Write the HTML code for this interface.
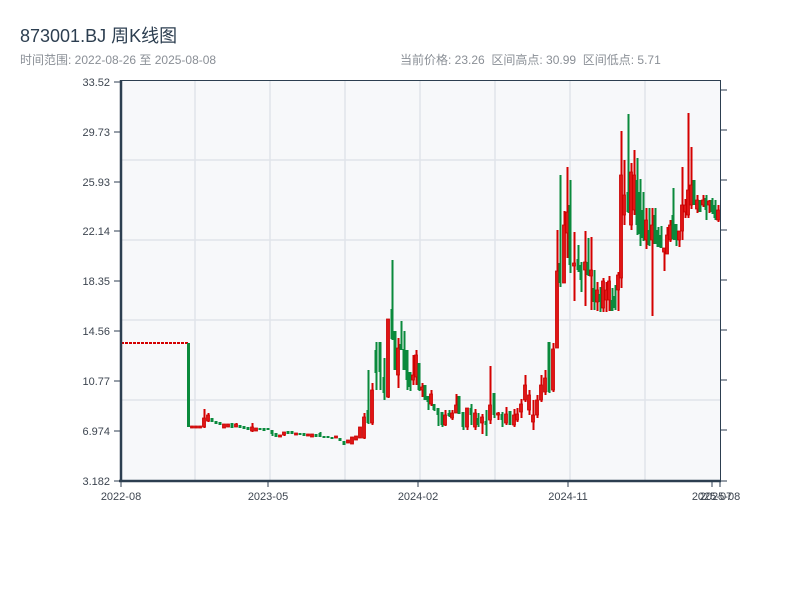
<!DOCTYPE html>
<html><head><meta charset="utf-8"><style>
body{margin:0;width:800px;height:600px;background:#fff;overflow:hidden;font-family:"Liberation Sans","Noto Sans CJK SC",sans-serif;}
.t{position:absolute;left:20px;top:22px;font-size:18px;color:#2c3e50;}
.s{position:absolute;top:51px;font-size:12px;color:#8a8f96;}
</style></head><body>
<div class="t">873001.BJ 周K线图</div>
<div class="s" style="left:20px">时间范围: 2022-08-26 至 2025-08-08</div>
<div class="s" style="left:400px">当前价格: 23.26&nbsp;&nbsp;区间高点: 30.99&nbsp;&nbsp;区间低点: 5.71</div>
<svg id="c" width="800" height="600" style="position:absolute;left:0;top:0" xmlns="http://www.w3.org/2000/svg">
<rect x="121" y="81" width="599" height="400" fill="#f7f8fa"/>
<g stroke="#e1e4ea" stroke-width="1.5">
<line x1="195" y1="81" x2="195" y2="481"/><line x1="270" y1="81" x2="270" y2="481"/><line x1="345" y1="81" x2="345" y2="481"/><line x1="420" y1="81" x2="420" y2="481"/><line x1="495" y1="81" x2="495" y2="481"/><line x1="570" y1="81" x2="570" y2="481"/><line x1="645" y1="81" x2="645" y2="481"/>
<line x1="121" y1="160" x2="720" y2="160"/><line x1="121" y1="240" x2="720" y2="240"/><line x1="121" y1="320" x2="720" y2="320"/><line x1="121" y1="400" x2="720" y2="400"/>
</g>
<g id="k"></g>
<g stroke="#2c3e50">
<line x1="120" y1="80.5" x2="720" y2="80.5" stroke-width="1"/>
<line x1="121" y1="80" x2="121" y2="482" stroke-width="2.5"/>
<line x1="119" y1="481" x2="721" y2="481" stroke-width="2.5"/>
<line x1="720.5" y1="80" x2="720.5" y2="482" stroke-width="1"/>
<g stroke-width="1">
<line x1="114" y1="82" x2="120" y2="82"/><line x1="114" y1="132" x2="120" y2="132"/><line x1="114" y1="182" x2="120" y2="182"/><line x1="114" y1="231" x2="120" y2="231"/><line x1="114" y1="281" x2="120" y2="281"/><line x1="114" y1="331" x2="120" y2="331"/><line x1="114" y1="381" x2="120" y2="381"/><line x1="114" y1="431" x2="120" y2="431"/><line x1="114" y1="481" x2="120" y2="481"/>
<line x1="720" y1="90" x2="727" y2="90"/><line x1="720" y1="130" x2="727" y2="130"/><line x1="720" y1="180" x2="727" y2="180"/><line x1="720" y1="230" x2="727" y2="230"/><line x1="720" y1="280" x2="727" y2="280"/><line x1="720" y1="330" x2="727" y2="330"/><line x1="720" y1="380" x2="727" y2="380"/><line x1="720" y1="430" x2="727" y2="430"/><line x1="720" y1="481" x2="727" y2="481"/>
<line x1="121" y1="481" x2="121" y2="487"/><line x1="268" y1="481" x2="268" y2="487"/><line x1="418" y1="481" x2="418" y2="487"/><line x1="568" y1="481" x2="568" y2="487"/><line x1="712" y1="481" x2="712" y2="487"/><line x1="720" y1="481" x2="720" y2="487"/>
</g></g>
<g font-size="11" fill="#3d4550" text-anchor="end" font-family="Liberation Sans,sans-serif">
<text x="110" y="86">33.52</text><text x="110" y="136">29.73</text><text x="110" y="186">25.93</text><text x="110" y="235">22.14</text><text x="110" y="285">18.35</text><text x="110" y="335">14.56</text><text x="110" y="385">10.77</text><text x="110" y="435">6.974</text><text x="110" y="485">3.182</text>
</g>
<g font-size="11" fill="#3d4550" text-anchor="middle" font-family="Liberation Sans,sans-serif">
<text x="121" y="500">2022-08</text><text x="268" y="500">2023-05</text><text x="418" y="500">2024-02</text><text x="568" y="500">2024-11</text><text x="712" y="500">2025-07</text><text x="720" y="500">2025-08</text>
</g>
</svg>
<script>
var D=[
[191,426,428,426,428,'r'],[195,426,428,426,428,'r'],[199,426,428,426,428,'r'],[203,418,427,409,428,'r'],[207,415,421,413,422,'r'],[211,418,422,418,422,'g'],[215,421,424,421,424,'g'],[219,422,425,422,425,'g'],[223,424,428,424,428,'r'],[227,424,427,424,427,'r'],[231,423,428,423,428,'g'],[235,424,427,423,427,'r'],[239,425,428,425,428,'g'],[243,426,429,426,429,'g'],[247,427,430,427,430,'g'],[251,427,431,423,432,'r'],[255,428,431,428,431,'r'],[259,428,430,428,430,'g'],[263,428,431,428,431,'g'],[267,428,430,428,430,'g'],[271,430,434,430,436,'g'],[275,433,437,433,437,'g'],[279,435,437,435,437,'r'],[283,432,435,432,436,'r'],[287,431,434,431,434,'g'],[291,431,434,431,434,'g'],[295,433,435,433,435,'r'],[299,433,435,433,435,'g'],[303,433,436,433,436,'g'],[307,434,436,434,436,'r'],[311,434,437,434,437,'r'],[315,434,437,434,437,'g'],[319,433,437,432,437,'g'],[323,436,438,436,438,'g'],[327,436,438,436,438,'g'],[331,437,439,437,439,'g'],[335,436,438,436,438,'r'],[339,438,441,438,441,'g'],[343,441,445,441,445,'g'],[347,440,443,440,443,'r'],[351,437,444,437,444,'r'],[355,436,440,436,440,'r'],
[359,427,438,427,438,'r'],[363,417,438,413,439,'r'],[367,410,423,370,424,'g'],[371,390,423,383,425,'r'],[375,350,373,342,390,'g'],[379,342,372,342,390,'g'],[383,377,393,358,400,'g'],[387,319,397,319,398,'r'],[391,309,339,260,340,'g'],[394,331,370,331,370,'g'],[397,348,375,338,388,'r'],[400,344,350,321,350,'g'],[403,349,370,331,370,'g'],[406,350,380,350,390,'g'],[409,372,387,372,391,'g'],[412,375,380,355,385,'r'],[415,355,377,350,385,'r'],[418,363,390,363,391,'g'],[421,387,390,383,397,'r'],[424,385,400,385,400,'g'],[427,396,402,396,410,'g'],[430,394,404,390,406,'r'],[433,404,410,404,411,'g'],[437,408,415,408,426,'g'],[441,412,425,412,427,'g'],[444,415,425,410,426,'r'],[448,413,416,410,417,'g'],[451,413,418,410,420,'r'],[455,405,413,394,413,'r'],[458,396,414,396,414,'g'],[462,412,427,412,430,'g'],[466,408,427,410,430,'r'],[470,408,415,404,425,'g'],[474,413,427,409,430,'r'],[477,418,425,413,427,'g'],[481,417,423,414,434,'r'],[485,421,425,410,436,'g'],[489,405,420,366,424,'r'],[493,393,415,393,418,'g'],[497,413,415,412,420,'r'],[501,414,420,412,427,'g'],[505,414,423,407,425,'r'],[509,411,425,411,425,'g'],[513,415,425,409,427,'r'],[516,414,420,408,422,'r'],[520,404,412,399,418,'r'],[524,385,400,375,402,'r'],[528,395,410,390,415,'r'],[532,415,422,400,430,'r'],[536,400,415,395,418,'r'],[540,385,400,375,402,'r'],[544,378,392,370,395,'r'],[548,342,392,342,393,'g'],[552,349,390,343,392,'r'],[556,271,348,230,348,'r'],[559,263,283,175,287,'g'],[563,225,283,211,283,'r'],[566,212,233,167,258,'r'],[569,205,265,180,273,'g'],[573,263,266,232,301,'r'],[577,259,270,245,272,'g'],[580,265,280,262,292,'g'],[584,262,270,231,306,'r'],[587,262,275,238,276,'g'],[590,270,276,237,310,'r'],[593,288,302,270,310,'g'],[596,290,302,282,311,'r'],[599,294,302,287,312,'g'],[602,281,308,278,312,'r'],[605,290,300,282,312,'r'],[608,281,300,276,311,'r'],[611,300,311,288,311,'g'],[614,296,308,285,310,'g'],[617,275,290,272,311,'r'],[620,175,278,131,288,'r'],[623,195,215,160,225,'r'],[627,192,212,114,213,'g'],[630,172,225,163,230,'r'],[633,175,210,150,215,'r'],[636,180,225,158,235,'g'],[639,192,234,179,246,'g'],[642,210,238,192,241,'g'],[645,220,240,208,249,'r'],[648,230,245,208,246,'g'],[651,225,240,208,316,'r'],[654,215,244,208,244,'g'],[657,230,247,227,247,'g'],[660,235,248,226,248,'g'],[663,248,252,248,271,'r'],[666,235,254,227,254,'r'],[669,225,240,220,242,'r'],[672,215,239,188,240,'g'],[675,224,240,224,246,'g'],[678,231,240,231,247,'r'],[681,205,231,167,240,'r'],[684,205,212,199,218,'r'],[687,190,215,113,218,'r'],[690,185,205,147,209,'r'],[693,180,205,180,205,'g'],[696,200,209,195,213,'r'],[699,200,212,200,212,'g'],[702,200,205,195,207,'r'],[705,198,210,195,220,'g'],[708,201,205,200,213,'r'],[711,200,212,198,214,'g'],[714,205,218,200,220,'g'],[717,210,220,205,222,'r']
];
var s='';
for(var x=121;x<188;x+=4) s+='<rect x="'+x+'" y="342" width="3" height="2" fill="#d40000"/>';
s+='<rect x="187" y="343" width="3" height="84" fill="#0a8a3c"/>';
D.forEach(function(d){var x=d[0],r=d[5]=='r',col=r?'#d40000':'#0a8a3c';
s+='<rect x="'+(x+0.5)+'" y="'+d[3]+'" width="2" height="'+Math.max(1,d[4]-d[3])+'" fill="'+col+'"/>';
s+='<rect x="'+(x-0.5)+'" y="'+d[1]+'" width="3" height="'+Math.max(1.5,d[2]-d[1])+'" fill="'+(r?'#e01515':col)+'" '+(r?'stroke="#c80000" stroke-width="0.8"':'')+'/>';});
document.getElementById('k').innerHTML=s;
</script>
</body></html>
